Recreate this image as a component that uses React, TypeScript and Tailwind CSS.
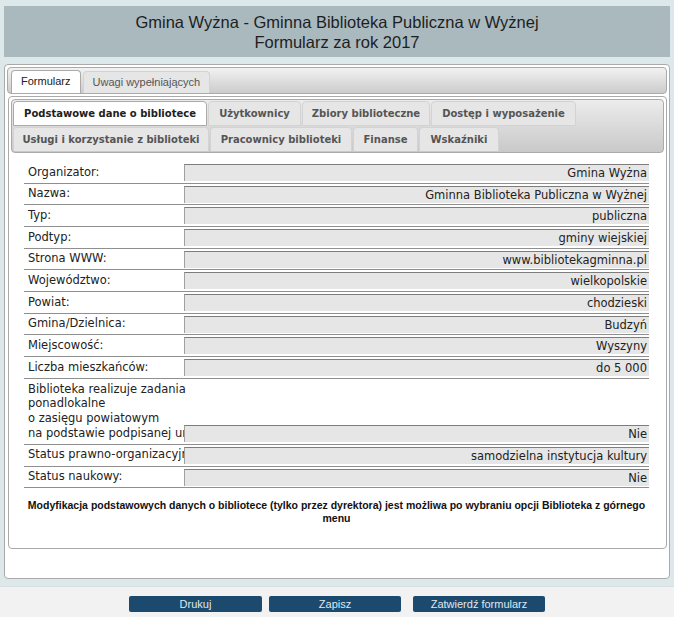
import React from 'react';

interface Row {
  label: string;
  value: string;
}

const rows: Row[] = [
  { label: 'Organizator:', value: 'Gmina Wyżna' },
  { label: 'Nazwa:', value: 'Gminna Biblioteka Publiczna w Wyżnej' },
  { label: 'Typ:', value: 'publiczna' },
  { label: 'Podtyp:', value: 'gminy wiejskiej' },
  { label: 'Strona WWW:', value: 'www.bibliotekagminna.pl' },
  { label: 'Województwo:', value: 'wielkopolskie' },
  { label: 'Powiat:', value: 'chodzieski' },
  { label: 'Gmina/Dzielnica:', value: 'Budzyń' },
  { label: 'Miejscowość:', value: 'Wyszyny' },
  { label: 'Liczba mieszkańców:', value: 'do 5 000' },
];

const tabsRow1 = [
  { name: 'Podstawowe dane o bibliotece', w: 'w-[194px]', active: true },
  { name: 'Użytkownicy', w: 'w-[93px]', active: false },
  { name: 'Zbiory biblioteczne', w: 'w-[128px]', active: false },
  { name: 'Dostęp i wyposażenie', w: 'w-[145px]', active: false },
];

const tabsRow2 = [
  { name: 'Usługi i korzystanie z biblioteki', w: 'w-[196px]' },
  { name: 'Pracownicy biblioteki', w: 'w-[142px]' },
  { name: 'Finanse', w: 'w-[65px]' },
  { name: 'Wskaźniki', w: 'w-[80px]' },
];

// the value box sits over any label text that runs too long, as in the original form
const ValueBox: React.FC<{ value: string; mb?: string }> = ({ value, mb = 'mb-[1.5px]' }) => (
  <div
    className={`relative w-[465px] shrink-0 h-[17px] ${mb} bg-[#e6e6e6] border-t border-l border-t-[#7d7d7d] border-l-[#a0a0a0] text-right pr-[2px] text-[11.5px] leading-[16px] text-[#222] whitespace-nowrap overflow-hidden`}
  >
    {value}
  </div>
);

const DataRow: React.FC<Row & { h?: string }> = ({ label, value, h = 'h-[21.67px]' }) => (
  <div className={`flex items-end justify-between ${h} border-b border-[#8f8f8f]`}>
    <div className="w-[158px] self-center pl-[4px] text-[11.5px] text-[#222] whitespace-nowrap">
      {label}
    </div>
    <ValueBox value={value} />
  </div>
);

export default function App() {
  return (
    <div
      className="h-screen flex flex-col bg-[#dde8ea] overflow-hidden"
      style={{ fontFamily: '"Liberation Sans", Arial, sans-serif' }}
    >
      {/* header */}
      <div className="pt-[6px] px-[4px]">
        <div className="h-[51px] bg-[#a9b9be] flex flex-col items-center justify-center text-[16.5px] leading-[20px] text-[#1e1e1e]">
          <div>Gmina Wyżna - Gminna Biblioteka Publiczna w Wyżnej</div>
          <div>Formularz za rok 2017</div>
        </div>
      </div>

      {/* outer tabs */}
      <div className="mx-[4px] mt-[7px] h-[515px] border border-[#aaaaaa] rounded-[4px] bg-white p-[2px]">
        <div className="h-[27px] border border-[#aaaaaa] rounded-[4px] bg-gradient-to-b from-[#f2f2f2] to-[#cccccc] flex items-end pl-[3px] gap-[2px]">
          <div className="h-[23px] px-[9px] bg-white border border-b-0 border-[#aaaaaa] rounded-t-[4px] text-[11px] leading-[21px] text-[#212121]">
            Formularz
          </div>
          <div className="h-[22px] px-[9px] bg-[#e6e6e6] border border-b-0 border-[#d3d3d3] rounded-t-[4px] text-[11px] leading-[21px] text-[#555555]">
            Uwagi wypełniających
          </div>
        </div>

        {/* inner tabs */}
        <div
          className="mt-[2px] ml-[1px] h-[453px] border border-[#aaaaaa] rounded-[4px] bg-white p-[2px]"
          style={{ fontFamily: '"DejaVu Sans", Verdana, sans-serif' }}
        >
          <div className="h-[54px] border border-[#aaaaaa] rounded-[4px] bg-gradient-to-b from-[#ececec] to-[#c9c9c9] pl-[1px] pt-[1px] text-[10px] font-bold">
            <div className="flex gap-[1px] h-[26px]">
              {tabsRow1.map((t) => (
                <div
                  key={t.name}
                  className={`${t.w} h-[25px] flex items-center justify-center border rounded-t-[4px] ${
                    t.active
                      ? 'bg-white border-[#aaaaaa] text-[#212121]'
                      : 'bg-[#e6e6e6] border-[#d3d3d3] text-[#555555]'
                  }`}
                >
                  {t.name}
                </div>
              ))}
            </div>
            <div className="flex gap-[1px] h-[25px]">
              {tabsRow2.map((t) => (
                <div
                  key={t.name}
                  className={`${t.w} h-[24px] flex items-center justify-center border border-b-0 border-[#d3d3d3] rounded-t-[4px] bg-[#e6e6e6] text-[#555555]`}
                >
                  {t.name}
                </div>
              ))}
            </div>
          </div>

          {/* panel content */}
          <div className="pt-[9px] pl-[13px] pr-[15px]">
            {rows.map((r) => (
              <DataRow key={r.label} label={r.label} value={r.value} />
            ))}

            <div className="flex items-end justify-between h-[66px] border-b border-[#8f8f8f]">
              <div className="w-[158px] self-start pt-[3px] pl-[4px] text-[11.5px] leading-[14.67px] text-[#222] whitespace-nowrap">
                <div>Biblioteka realizuje zadania</div>
                <div>ponadlokalne</div>
                <div>o zasięgu powiatowym</div>
                <div>na podstawie podpisanej umowy</div>
              </div>
              <ValueBox value="Nie" mb="mb-[2px]" />
            </div>
            <DataRow label="Status prawno-organizacyjny:" value="samodzielna instytucja kultury" h="h-[22px]" />
            <DataRow label="Status naukowy:" value="Nie" h="h-[21.67px]" />

            <p
              className="mt-[11px] text-center text-[10.5px] leading-[13px] font-bold text-[#111]"
              style={{ fontFamily: '"Liberation Sans", Arial, sans-serif' }}
            >
              Modyfikacja podstawowych danych o bibliotece (tylko przez dyrektora) jest możliwa po wybraniu opcji Biblioteka z górnego menu
            </p>
          </div>
        </div>
      </div>

      {/* footer */}
      <div className="mt-auto h-[31px] bg-[#f2f2f2] border-t border-[#d6dfe1] flex items-start pt-[9px] pl-[129px] text-[11px]">
        <button className="w-[133px] h-[16px] rounded-[2px] bg-[#1b4a6e] text-[#dfe8f0] leading-[16px]">Drukuj</button>
        <button className="ml-[7px] w-[132px] h-[16px] rounded-[2px] bg-[#1b4a6e] text-[#dfe8f0] leading-[16px]">Zapisz</button>
        <button className="ml-[12px] w-[132px] h-[16px] rounded-[2px] bg-[#1b4a6e] text-[#dfe8f0] leading-[16px]">Zatwierdź formularz</button>
      </div>
    </div>
  );
}
